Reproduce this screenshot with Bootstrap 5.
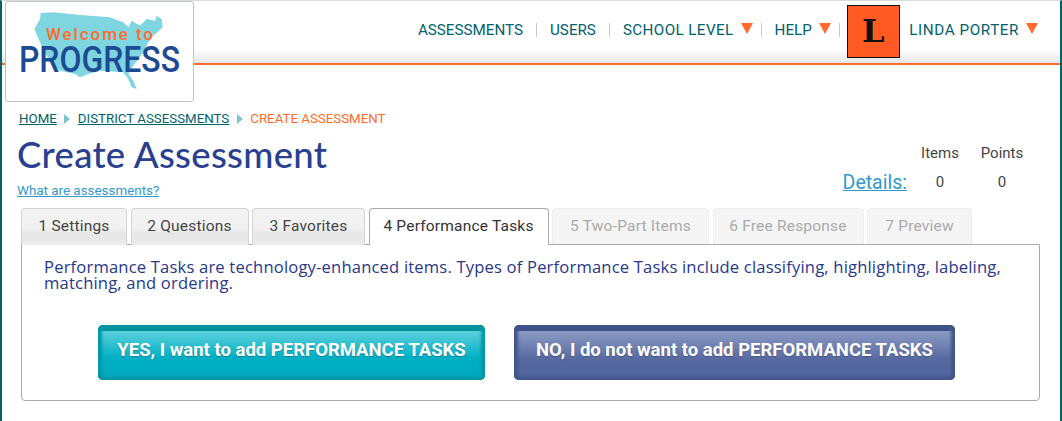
<!DOCTYPE html>
<html lang="en">
<head>
<meta charset="utf-8">
<title>Create Assessment</title>
<link href="https://cdn.jsdelivr.net/npm/bootstrap@5.3.0/dist/css/bootstrap.min.css" rel="stylesheet">
<style>
html,body{height:100%}
body{font-family:Roboto,"Liberation Sans",sans-serif;font-size:15px;color:#444;background:#fff;overflow:hidden}
.page-frame{height:421px;border-left:2px solid #00626b;border-right:2px solid #00626b;border-top:1px solid #d8dbe0}
.top-bar{height:64px;border-bottom:2px solid #ff6c2c;background:linear-gradient(#fff 0,#fff 48px,#e6e6e6 62px)}
.logo-box{width:189px;height:101px;margin-left:3px;background:#fff;border:1px solid #bcc4c6;border-radius:3px;position:relative;z-index:2;flex:none;display:block}
.logo-box svg{display:block;overflow:visible}
.logo-welcome{font-family:Roboto,sans-serif;font-size:17px;font-weight:500;fill:#ff6c2c}
.logo-progress{font-family:Roboto,sans-serif;font-size:36px;font-weight:500;fill:#1c4a93}
.main-nav{height:58px;padding-right:12px;font-size:15.2px}
.main-nav a{color:#00626b;text-decoration:none;white-space:nowrap;display:inline-flex;align-items:center}
.nav-sep{padding:0 13px;border-right:1px solid #c9c9c9;height:14px;display:flex;align-items:center}
.nav-wide{letter-spacing:.4px}
.nav-plain{padding:0 10px 0 9.5px;letter-spacing:.6px}
.caret-down{display:inline-block;width:0;height:0;border-left:6px solid transparent;border-right:6px solid transparent;border-top:11px solid #ff6c2c;margin-left:7px;margin-top:-3px}
.avatar-l{width:53px;height:53px;background:#ff5a21;border:1px solid #111;color:#111;font-family:"DejaVu Serif","Liberation Serif",serif;font-weight:700;font-size:32px;line-height:50px;text-align:center;margin:2px 0 0 7px}
.trail{padding:40px 0 0 17px;font-size:13.3px;height:69px;display:flex;align-items:center;gap:6.5px;margin-top:-1px}
.trail a{color:#00626b}
.trail-current{color:#ff6c2c}
.trail-arrow{width:0;height:0;border-top:5px solid transparent;border-bottom:5px solid transparent;border-left:6px solid #7fc4cd;margin:0 1px}
.page-title{font-family:Lato,sans-serif;font-size:36.5px;font-weight:500;color:#2a3f8f;margin:0;line-height:42px;letter-spacing:.3px}
.help-link{font-size:13.4px;color:#3399cc;line-height:18px;display:inline-block;margin-top:7px}
.title-row{padding:0 17px 0 15px;height:67px}
.stats-box{display:grid;grid-template-columns:auto 62px 62px;row-gap:6px;text-align:center;margin:9px 10px 0 0;font-size:15px;color:#444}
.stats-head-first{grid-column:2}
.details-link{font-size:19.5px;color:#3399cc;grid-row:2;grid-column:1;line-height:24px;margin-right:2px}
.tab-strip{margin:8px 0 -1px 19px;width:1019px;border:0;gap:3.5px;padding:0;list-style:none;display:flex;position:relative;z-index:1}
.tab-item{height:37px;padding:0;font-size:15.5px;letter-spacing:.2px;line-height:34px;border:1px solid #d4d4d4;border-bottom:0;border-radius:4px 4px 0 0;background:linear-gradient(#f2f2f2,#f2f2f2 50%,#e6e6e6 70%,#ececec);color:#444;white-space:nowrap;text-align:center;flex:none}
.tab-item.is-current{background:#fff;border-color:#aaa;color:#333}
.tab-item.is-locked{background:#f5f5f5;border-color:#eee;color:#aaa;height:36px}
.tab-w1{width:106px}.tab-w2{width:118px}.tab-w3{width:113px}.tab-w4{width:180px}.tab-w5{width:157px}.tab-w6{width:151px}.tab-w7{width:105px}
.tab-body{margin-left:19px;width:1019px;height:157px;border:1px solid #aaa;border-radius:0 0 4px 4px;padding:14px 22px 0}
.tab-text{font-family:"Open Sans",sans-serif;font-size:16.6px;letter-spacing:.17px;line-height:16px;color:#27388a;margin:0}
.action-row{margin:34px 0 0 54px;gap:29px}
.action-btn{height:55px;border-radius:5px;color:#fff;font-weight:700;font-size:18.5px;border:0;padding:0 0 3px;text-shadow:0 1px 1px rgba(0,0,0,.25);white-space:nowrap}
.action-btn:hover,.action-btn:active{color:#fff}
.action-yes{width:387px;background:linear-gradient(#00919f 0 6px,#5dd0dc 6px,#00afc4 60%,#00a9bd);box-shadow:inset 6px 0 3px -2px #0098a8,inset -6px 0 3px -2px #0098a8,inset 0 -3px 3px #0095a5}
.action-no{width:441px;background:linear-gradient(#3f5288 0 6px,#8c9bc4 6px,#54679f 65%,#50639c);box-shadow:inset 6px 0 3px -2px #43568c,inset -6px 0 3px -2px #43568c,inset 0 -3px 3px #43568c}
</style>
</head>
<body>
<div class="page-frame">
  <header class="top-bar d-flex justify-content-between align-items-start">
    <a href="#" class="logo-box" aria-label="Welcome to Progress">
      <svg width="187" height="99" viewBox="0 0 187 99">
        <g transform="translate(-6,-3) scale(.3333)">
          <path fill="#7fd6e0" d="M122 42 L160 40 L240 48 L330 55 L370 70 L385 85 L395 65 L420 80 L440 60 L465 65 L470 50 L485 60 L488 85 L460 110 L445 130 L430 160 L400 200 L385 225 L400 245 L410 270 L395 265 L385 240 L370 220 L300 215 L265 225 L240 235 L225 225 L180 215 L150 190 L120 130 L103 90 L120 60 Z"/>
        </g>
        <text x="40" y="38" class="logo-welcome" textLength="107">Welcome to</text>
        <text x="13" y="70" class="logo-progress" textLength="161" lengthAdjust="spacingAndGlyphs">PROGRESS</text>
      </svg>
    </a>
    <nav class="main-nav d-flex align-items-center">
      <div class="nav-sep"><a href="#">ASSESSMENTS</a></div>
      <div class="nav-sep"><a href="#">USERS</a></div>
      <div class="nav-sep nav-wide pe-2"><a href="#">SCHOOL LEVEL<span class="caret-down"></span></a></div>
      <div class="nav-sep pe-2"><a href="#">HELP<span class="caret-down"></span></a></div>
      <div class="avatar-l">L</div>
      <div class="nav-plain"><a href="#">LINDA PORTER<span class="caret-down"></span></a></div>
    </nav>
  </header>

  <div class="trail">
    <a href="#">HOME</a><span class="trail-arrow"></span>
    <a href="#">DISTRICT ASSESSMENTS</a><span class="trail-arrow"></span>
    <span class="trail-current">CREATE ASSESSMENT</span>
  </div>

  <div class="title-row d-flex justify-content-between align-items-start">
    <div>
      <h1 class="page-title">Create Assessment</h1>
      <a href="#" class="help-link">What are assessments?</a>
    </div>
    <div class="stats-box">
      <span class="stats-head-first">Items</span><span>Points</span>
      <a href="#" class="details-link">Details:</a><span>0</span><span>0</span>
    </div>
  </div>

  <ul class="tab-strip">
    <li class="tab-item tab-w1">1 Settings</li>
    <li class="tab-item tab-w2">2 Questions</li>
    <li class="tab-item tab-w3">3 Favorites</li>
    <li class="tab-item tab-w4 is-current">4 Performance Tasks</li>
    <li class="tab-item tab-w5 is-locked">5 Two-Part Items</li>
    <li class="tab-item tab-w6 is-locked">6 Free Response</li>
    <li class="tab-item tab-w7 is-locked">7 Preview</li>
  </ul>
  <div class="tab-body">
    <p class="tab-text">Performance Tasks are technology-enhanced items. Types of Performance Tasks include classifying, highlighting, labeling, matching, and ordering.</p>
    <div class="action-row d-flex">
      <button type="button" class="btn action-btn action-yes">YES, I want to add PERFORMANCE TASKS</button>
      <button type="button" class="btn action-btn action-no">NO, I do not want to add PERFORMANCE TASKS</button>
    </div>
  </div>
</div>
<script src="https://cdn.jsdelivr.net/npm/bootstrap@5.3.0/dist/js/bootstrap.bundle.min.js"></script>
</body>
</html>
